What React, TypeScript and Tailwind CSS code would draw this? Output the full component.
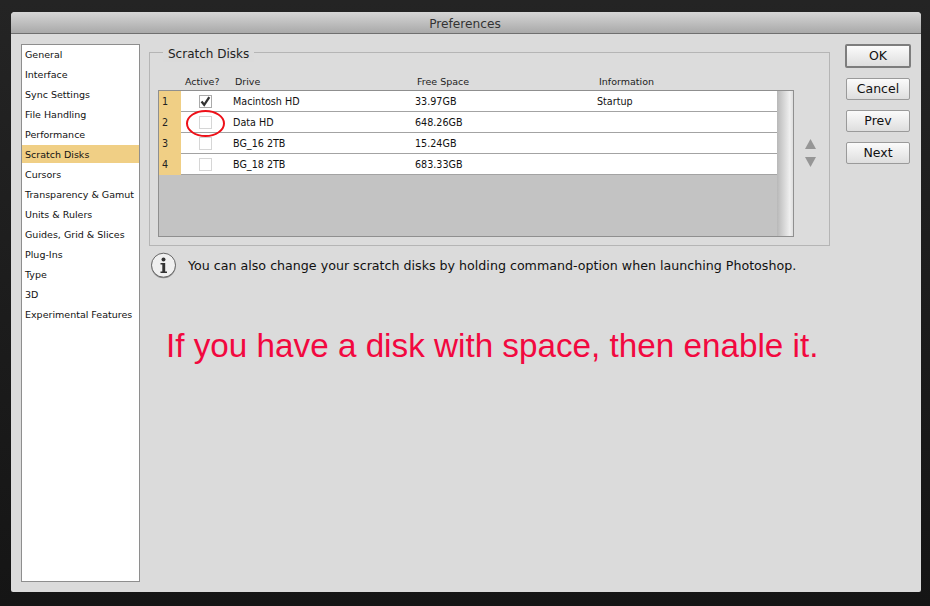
const ui = { fontFamily: '"DejaVu Sans", sans-serif' };
const items = ["General","Interface","Sync Settings","File Handling","Performance","Scratch Disks","Cursors","Transparency & Gamut","Units & Rulers","Guides, Grid & Slices","Plug-Ins","Type","3D","Experimental Features"];
const rows = [["1","Macintosh HD","33.97GB","Startup"],["2","Data HD","648.26GB",""],["3","BG_16 2TB","15.24GB",""],["4","BG_18 2TB","683.33GB",""]];

function Btn({ label, def }: { label: string; def?: boolean }) {
  return (
    <button className={`flex items-center justify-center rounded-[2px] bg-gradient-to-b from-[#fbfbfb] to-[#dedede] text-[12.5px] text-[#111] ${def ? "w-[66px] h-[24px] border-2 border-[#7d7d7d]" : "w-[64px] h-[22px] mx-px border border-[#9a9a9a]"}`}>
      {label}
    </button>
  );
}

export default function App() {
  return (
    <div style={ui} className="w-[930px] h-[606px] bg-gradient-to-b from-[#242424] to-[#151515] pt-[12px] pl-[11px] overflow-hidden">
      <div className="w-[910px] h-[580px] bg-[#dbdbdb] rounded-t-[4px] rounded-b-[2px] flex flex-col">
        <div className="h-[22px] shrink-0 pt-[3px] pr-[2px] rounded-t-[4px] bg-gradient-to-b from-[#d6d6d6] to-[#a9a9a9] border-b border-[#6f6f6f] flex items-center justify-center text-[12.2px] text-[#333]">
          Preferences
        </div>
        <div className="flex flex-1 pt-[10px] pl-[10px]">
          <div className="w-[119px] h-[538px] shrink-0 bg-white border border-[#8e8e8e] flex flex-col gap-[2px] text-[9.5px] text-[#111]">
            {items.map((t) => (
              <div key={t} className={`h-[18px] pl-[3px] pt-[2px] flex items-center whitespace-nowrap ${t === "Scratch Disks" ? "bg-[#f0cf85]" : ""}`}>{t}</div>
            ))}
          </div>
          <div className="ml-[9px] w-[681px] shrink-0 flex flex-col">
            <div className="relative mt-[8px] h-[194px] border border-[#b5b5b5] bg-[#dcdcdc] pl-[8px] pt-[37px]">
              <div className="absolute left-[13px] -top-[6px] bg-[#dbdbdb] px-[5px] text-[12px] leading-[15px] text-[#222]">Scratch Disks</div>
              <div className="absolute left-[35px] top-[22px] flex text-[9.5px] leading-[13px] text-[#222]">
                <span className="w-[50px]">Active?</span>
                <span className="w-[182px]">Drive</span>
                <span className="w-[182px]">Free Space</span>
                <span>Information</span>
              </div>
              <div className="flex items-center">
                <div className="relative w-[636px] h-[147px] shrink-0 flex border border-[#8f8f8f] bg-[#c3c3c3]">
                  <div className="flex-1 flex flex-col">
                    {rows.map((r, i) => (
                      <div key={r[0]} className="h-[21px] shrink-0 flex items-center text-[9.6px] text-[#111] bg-white border-b border-[#a3a3a3]">
                        <div className="w-[22px] self-stretch -mb-px pt-[2px] bg-[#f0cf85] pl-[3px] flex items-center text-[#222]">{r[0]}</div>
                        <div className="w-[52px] flex justify-center pr-[4px]">
                          <div className={`relative w-[13px] h-[13px] border ${i === 0 ? "border-[#aaaaaa]" : "border-[#d6d6d6]"} bg-white`}>
                            {i === 0 && (
                              <svg viewBox="0 0 13 13" className="absolute -left-px -top-px w-[13px] h-[13px]">
                                <path d="M2.5 6.5 L5.2 9.8 L10.3 2.2" fill="none" stroke="#333" strokeWidth="2.3" />
                              </svg>
                            )}
                          </div>
                        </div>
                        <div className="w-[182px] pt-[2px]">{r[1]}</div>
                        <div className="w-[182px] pt-[2px]">{r[2]}</div>
                        <div className="pt-[2px]">{r[3]}</div>
                      </div>
                    ))}
                  </div>
                  <div className="w-[16px] shrink-0 bg-[linear-gradient(to_right,#b8b8b8,#efefef_80%,#dddddd)]" />
                  <div className="absolute left-[27px] top-[19px] w-[39px] h-[27px] rounded-[50%] border-2 border-[#ee1018]" />
                </div>
                <div className="ml-[11px] -mt-[21px] flex flex-col items-center gap-[8px]">
                  <svg width="11" height="10" viewBox="0 0 11 10"><path d="M5.5 0 L11 10 H0 Z" fill="#969696" /></svg>
                  <svg width="11" height="10" viewBox="0 0 11 10"><path d="M0 0 H11 L5.5 10 Z" fill="#969696" /></svg>
                </div>
              </div>
            </div>
            <div className="mt-[5px] flex items-center h-[28px] pl-px">
              <svg width="27" height="27" viewBox="0 0 27 27" className="shrink-0">
                <circle cx="13.5" cy="14" r="12.2" fill="#8a8a8a" />
                <circle cx="13.5" cy="13.2" r="12" fill="#f0f0f0" stroke="#666" strokeWidth="1" />
                <circle cx="13.5" cy="7.5" r="2" fill="#333" />
                <path d="M10.5 11 H15.2 V19.5 H17 V21 H10.5 V19.5 H12.3 V12.5 H10.5 Z" fill="#333" />
              </svg>
              <span className="ml-[11px] pt-[2px] text-[12.65px] text-[#111] whitespace-nowrap">You can also change your scratch disks by holding command-option when launching Photoshop.</span>
            </div>
            <div style={{ fontFamily: '"Liberation Sans", sans-serif' }} className="mt-[47px] ml-[17px] text-[33.25px] leading-[40px] text-[#f2083f] whitespace-nowrap">
              If you have a disk with space, then enable it.
            </div>
          </div>
          <div className="ml-[15px] flex flex-col items-start gap-[10px]">
            <Btn label="OK" def />
            <Btn label="Cancel" />
            <Btn label="Prev" />
            <Btn label="Next" />
          </div>
        </div>
      </div>
    </div>
  );
}
